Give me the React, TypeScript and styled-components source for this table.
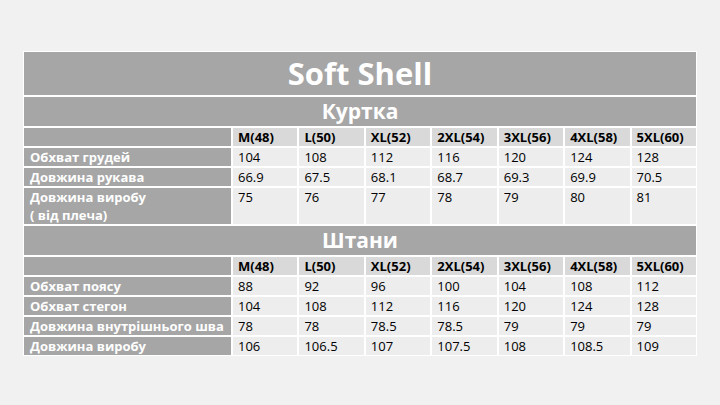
import styled, { createGlobalStyle } from 'styled-components';

const GlobalStyle = createGlobalStyle`
  html, body {
    margin: 0;
    padding: 0;
    background: #f1f1f1;
  }
  body {
    font-family: 'Open Sans', 'Noto Sans', sans-serif;
  }
`;

const Page = styled.div`
  width: 720px;
  height: 405px;
  padding: 51px 0 0 23px;
  box-sizing: border-box;
`;

const Table = styled.div`
  width: 674px;
  box-sizing: border-box;
  display: grid;
  grid-template-columns: 207px repeat(7, 1fr);
  gap: 2px;
  padding: 1px;
  background: #fff;
`;

const Banner = styled.div<{ $big?: boolean }>`
  grid-column: 1 / -1;
  height: ${({ $big }) => ($big ? 43 : 29)}px;
  background: #a6a6a6;
  color: #fff;
  font-weight: 700;
  font-size: ${({ $big }) => ($big ? 31 : 21)}px;
  line-height: ${({ $big }) => ($big ? 43 : 29)}px;
  text-align: center;
`;

const Label = styled.div<{ $tall?: boolean }>`
  min-height: ${({ $tall }) => ($tall ? 36 : 18)}px;
  background: #a6a6a6;
  color: #fff;
  font-weight: 700;
  font-size: 13px;
  line-height: 18px;
  padding: 0 6px;
  white-space: pre-line;
  overflow: hidden;
`;

const Cell = styled.div<{ $head?: boolean }>`
  background: ${({ $head }) => ($head ? '#d9d9d9' : '#ededed')};
  color: #000;
  font-weight: ${({ $head }) => ($head ? 700 : 400)};
  font-size: 13px;
  line-height: 18px;
  padding: 0 5px;
  white-space: nowrap;
`;

const sizes = ['M(48)', 'L(50)', 'XL(52)', '2XL(54)', '3XL(56)', '4XL(58)', '5XL(60)'];

const jacket = [
  { label: 'Обхват грудей', values: ['104', '108', '112', '116', '120', '124', '128'] },
  { label: 'Довжина рукава', values: ['66.9', '67.5', '68.1', '68.7', '69.3', '69.9', '70.5'] },
  { label: 'Довжина виробу\n( від плеча)', values: ['75', '76', '77', '78', '79', '80', '81'], tall: true },
];

const pants = [
  { label: 'Обхват поясу', values: ['88', '92', '96', '100', '104', '108', '112'] },
  { label: 'Обхват стегон', values: ['104', '108', '112', '116', '120', '124', '128'] },
  { label: 'Довжина внутрішнього шва', values: ['78', '78', '78.5', '78.5', '79', '79', '79'] },
  { label: 'Довжина виробу', values: ['106', '106.5', '107', '107.5', '108', '108.5', '109'] },
];

type Row = { label: string; values: string[]; tall?: boolean };

const Section = ({ title, rows }: { title: string; rows: Row[] }) => (
  <>
    <Banner>{title}</Banner>
    <Label />
    {sizes.map((s) => (
      <Cell key={s} $head>
        {s}
      </Cell>
    ))}
    {rows.map((r) => (
      <Row key={r.label} row={r} />
    ))}
  </>
);

const Row = ({ row }: { row: Row }) => (
  <>
    <Label $tall={row.tall}>{row.label}</Label>
    {row.values.map((v, i) => (
      <Cell key={i}>{v}</Cell>
    ))}
  </>
);

const App = () => {
  return (
    <Page>
      <GlobalStyle />
      <Table>
        <Banner $big>Soft Shell</Banner>
        <Section title="Куртка" rows={jacket} />
        <Section title="Штани" rows={pants} />
      </Table>
    </Page>
  );
};

export default App;
